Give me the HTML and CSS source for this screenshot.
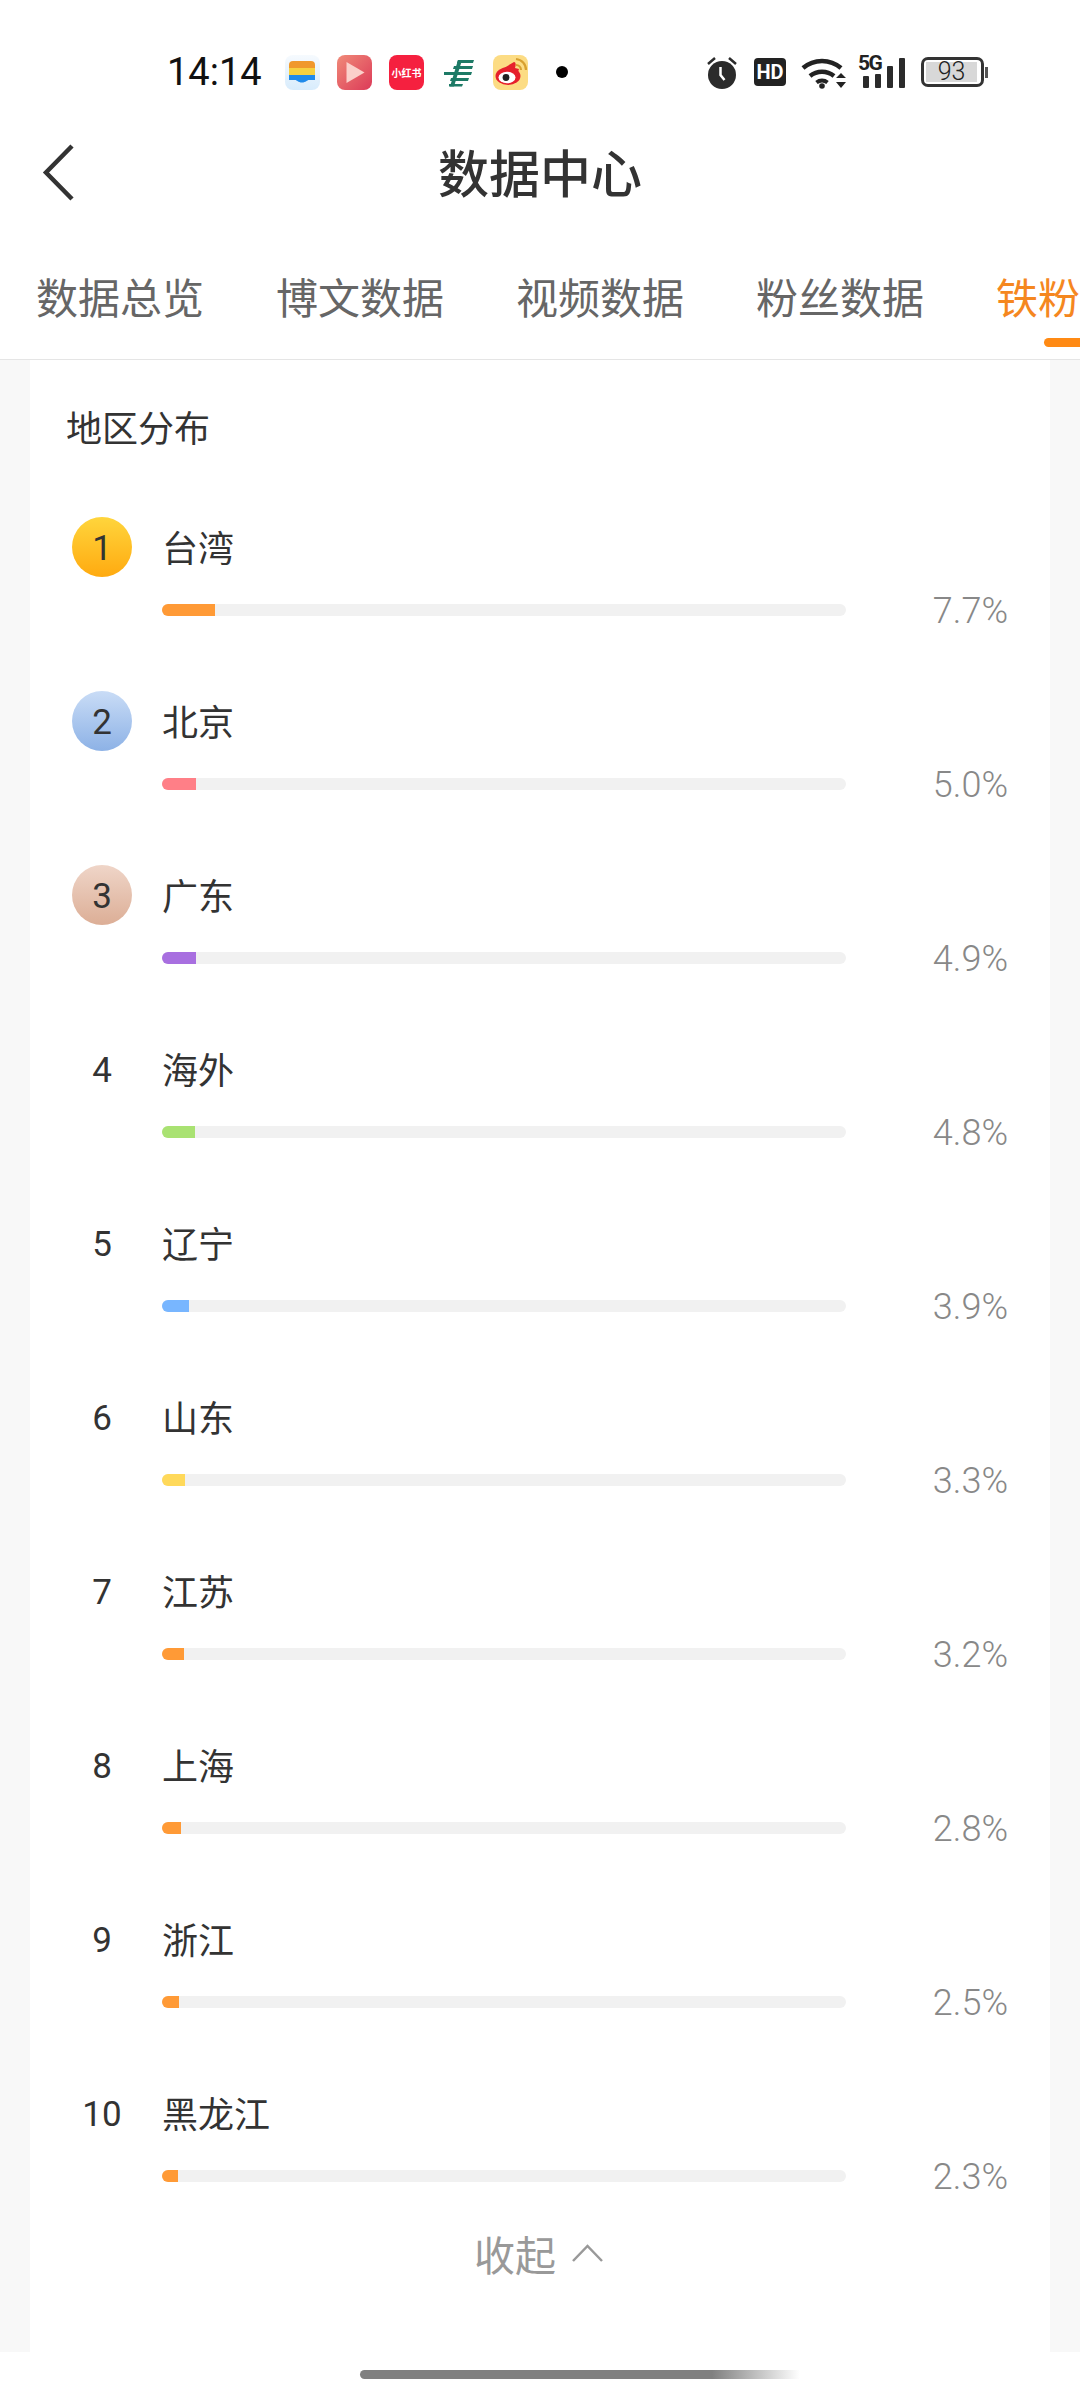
FILE: index.html
```html
<!DOCTYPE html>
<html lang="zh-CN">

<head>
    <meta charset="UTF-8">
    <meta name="viewport" content="width=device-width, initial-scale=1.0">
    <title>数据中心</title>

    <link rel="stylesheet" href="styles.css">
</head>

<body>
    <div class="statusBar">
        <span class="time">14:14</span>
        <div class="appIcons">
            <!-- wallet -->
            <svg class="appIcon" viewBox="0 0 35 35">
                <defs>
                    <linearGradient id="walletBg" x1="0" y1="0" x2="0" y2="1">
                        <stop offset="0" stop-color="#f6fafe" />
                        <stop offset="1" stop-color="#d8ecfc" />
                    </linearGradient>
                </defs>
                <rect width="35" height="35" rx="8" fill="url(#walletBg)" />
                <path d="M4 10a4 4 0 0 1 4-4h18a4 4 0 0 1 4 4v3H4z" fill="#f0982c" />
                <rect x="4" y="13" width="26" height="7" fill="#f6d040" />
                <path d="M4 20h26v5h-6c-2 0-3 2.500-7 2.500s-5-2.500-7-2.500H4z" fill="#1f8aea" />
            </svg>
            <!-- video player -->
            <svg class="appIcon" viewBox="0 0 35 35">
                <defs>
                    <linearGradient id="playBg" x1="0" y1="0" x2="1" y2="1">
                        <stop offset="0" stop-color="#f08a78" />
                        <stop offset="1" stop-color="#dc3a58" />
                    </linearGradient>
                </defs>
                <rect width="35" height="35" rx="8" fill="url(#playBg)" />
                <path d="M9.500 7v21l18-10.500z" fill="#fbd0ca" />
            </svg>
            <!-- xiaohongshu -->
            <div class="appIcon redBook">小红书</div>
            <!-- post office -->
            <svg class="appIcon" viewBox="0 0 35 35">
                <g fill="#1d7a66">
                    <path d="M17 5h16l-1 3H16z" />
                    <path d="M13 11h19l-1 3H12z" />
                    <path d="M3 17h28l-1 3H3z" />
                    <path d="M10 23h18l-1 3H9z" />
                    <path d="M8 29h14l-1 2.500H8z" />
                    <path d="M17 5h4l-8 26.500H9z" />
                </g>
            </svg>
            <!-- weibo -->
            <svg class="appIcon" viewBox="0 0 35 35">
                <rect width="35" height="35" rx="8" fill="#fcdc84" />
                <ellipse cx="15" cy="21" rx="12.500" ry="9" fill="#e6202c" />
                <path d="M11 13l10-6c2 0 2 3 1 6l4 1-2 6z" fill="#e6202c" />
                <ellipse cx="14" cy="22.500" rx="8.500" ry="5.800" fill="#fff" />
                <circle cx="13" cy="22.500" r="3.400" fill="#222" />
                <path d="M23 10a5 5 0 0 1 5 5M23 4a11 11 0 0 1 10 11" fill="none" stroke="#d8a030" stroke-width="2.200" />
            </svg>
        </div>
        <span class="statusDot"></span>

        <div class="sysIcons">
            <svg class="alarmIcon" viewBox="0 0 32 34">
                <circle cx="16" cy="20" r="14" fill="#2b2b2b" />
                <path d="M2 9l7-6M30 9l-7-6" stroke="#2b2b2b" stroke-width="2.500" fill="none" />
                <path d="M14.500 12v8l4 5" stroke="#fff" stroke-width="2.500" fill="none" />
            </svg>
            <span class="hdIcon">HD</span>
            <svg class="wifiIcon" viewBox="0 0 46 33">
                <path d="M2 12a29 29 0 0 1 38 0" fill="none" stroke="#222" stroke-width="4.500" />
                <path d="M9 20a19 19 0 0 1 24 0" fill="none" stroke="#222" stroke-width="4.500" />
                <path d="M15.500 26.500a9 9 0 0 1 11 0" fill="none" stroke="#222" stroke-width="4" />
                <circle cx="21" cy="30" r="2.800" fill="#222" />
                <path d="M35 22h10l-5-5zM35 26h10l-5 6z" fill="#222" />
            </svg>
            <div class="signal">
                <span class="signalLabel">5G</span>
                <span class="signalBar barA"></span>
                <span class="signalBar barB"></span>
                <span class="signalBar barC"></span>
                <span class="signalBar barD"></span>
            </div>
            <div class="battery">
                <div class="batteryBody">
                    <div class="batteryFill">93</div>
                </div>
                <span class="batteryNub"></span>
            </div>
        </div>
    </div>

    <header class="navBar">
        <svg class="backIcon" viewBox="0 0 33 57">
            <path d="M30 2L4 28.500 30 55" fill="none" stroke="#333" stroke-width="4.500" />
        </svg>
        <h1>数据中心</h1>
    </header>

    <nav class="tabs">
        <div class="tab">数据总览</div>
        <div class="tab">博文数据</div>
        <div class="tab">视频数据</div>
        <div class="tab">粉丝数据</div>
        <div class="tab tabActive">铁粉</div>
    </nav>

    <main class="content">
        <section class="card">
            <h2>地区分布</h2>

            <div class="rankList">
                <div class="rankRow">
                    <div class="rankHead"><span class="rankNo gold">1</span><span class="rankName">台湾</span></div>
                    <div class="rankBar">
                        <div class="track"><div class="fill fillOrange" style="width: 7.7%"></div></div>
                        <span class="percent">7.7%</span>
                    </div>
                </div>
                <div class="rankRow">
                    <div class="rankHead"><span class="rankNo silver">2</span><span class="rankName">北京</span></div>
                    <div class="rankBar">
                        <div class="track"><div class="fill fillPink" style="width: 5%"></div></div>
                        <span class="percent">5.0%</span>
                    </div>
                </div>
                <div class="rankRow">
                    <div class="rankHead"><span class="rankNo bronze">3</span><span class="rankName">广东</span></div>
                    <div class="rankBar">
                        <div class="track"><div class="fill fillPurple" style="width: 4.9%"></div></div>
                        <span class="percent">4.9%</span>
                    </div>
                </div>
                <div class="rankRow">
                    <div class="rankHead"><span class="rankNo">4</span><span class="rankName">海外</span></div>
                    <div class="rankBar">
                        <div class="track"><div class="fill fillGreen" style="width: 4.8%"></div></div>
                        <span class="percent">4.8%</span>
                    </div>
                </div>
                <div class="rankRow">
                    <div class="rankHead"><span class="rankNo">5</span><span class="rankName">辽宁</span></div>
                    <div class="rankBar">
                        <div class="track"><div class="fill fillBlue" style="width: 3.9%"></div></div>
                        <span class="percent">3.9%</span>
                    </div>
                </div>
                <div class="rankRow">
                    <div class="rankHead"><span class="rankNo">6</span><span class="rankName">山东</span></div>
                    <div class="rankBar">
                        <div class="track"><div class="fill fillYellow" style="width: 3.3%"></div></div>
                        <span class="percent">3.3%</span>
                    </div>
                </div>
                <div class="rankRow">
                    <div class="rankHead"><span class="rankNo">7</span><span class="rankName">江苏</span></div>
                    <div class="rankBar">
                        <div class="track"><div class="fill fillOrange" style="width: 3.2%"></div></div>
                        <span class="percent">3.2%</span>
                    </div>
                </div>
                <div class="rankRow">
                    <div class="rankHead"><span class="rankNo">8</span><span class="rankName">上海</span></div>
                    <div class="rankBar">
                        <div class="track"><div class="fill fillOrange" style="width: 2.8%"></div></div>
                        <span class="percent">2.8%</span>
                    </div>
                </div>
                <div class="rankRow">
                    <div class="rankHead"><span class="rankNo">9</span><span class="rankName">浙江</span></div>
                    <div class="rankBar">
                        <div class="track"><div class="fill fillOrange" style="width: 2.5%"></div></div>
                        <span class="percent">2.5%</span>
                    </div>
                </div>
                <div class="rankRow">
                    <div class="rankHead"><span class="rankNo">10</span><span class="rankName">黑龙江</span></div>
                    <div class="rankBar">
                        <div class="track"><div class="fill fillOrange" style="width: 2.3%"></div></div>
                        <span class="percent">2.3%</span>
                    </div>
                </div>
            </div>

            <div class="collapse">
                <span>收起</span>
                <svg class="collapseIcon" viewBox="0 0 32 18">
                    <path d="M1.500 17L16 2l14.500 15" fill="none" stroke="#999" stroke-width="2.500" />
                </svg>
            </div>
        </section>
    </main>

    <div class="homeArea">
        <div class="homeBar"></div>
    </div>
</body>

</html>
```

FILE: styles.css
```css
body {
    font-family: Roboto, "Noto Sans CJK SC", sans-serif;
    background-color: #fff;
    color: #333;
    margin: 0;
    padding: 0;
    width: 1080px;
    height: 2400px;
    overflow: hidden;
    display: flex;
    flex-direction: column;
}

/* Status bar */
.statusBar {
    height: 144px;
    display: flex;
    align-items: center;
    padding: 0 92px 0 167px;
    box-sizing: border-box;
}

.time {
    font-size: 38px;
    color: #111;
    width: 118px;
}

.appIcons {
    display: flex;
    gap: 17px;
    align-items: center;
}

.appIcon {
    width: 35px;
    height: 35px;
}

.redBook {
    background-color: #f5203f;
    border-radius: 8px;
    color: #fff;
    font-size: 10px;
    font-weight: bold;
    display: flex;
    align-items: center;
    justify-content: center;
    white-space: nowrap;
}

.statusDot {
    width: 12px;
    height: 12px;
    border-radius: 50%;
    background-color: #000;
    margin-left: 28px;
}

.sysIcons {
    margin-left: auto;
    display: flex;
    align-items: center;
}

.alarmIcon {
    width: 32px;
    height: 34px;
}

.hdIcon {
    width: 32px;
    height: 28px;
    margin-left: 16px;
    background-color: #222;
    border-radius: 4px;
    color: #fff;
    font-size: 20px;
    font-weight: bold;
    line-height: 28px;
    text-align: center;
}

.wifiIcon {
    width: 46px;
    height: 33px;
    margin-left: 15px;
}

.signal {
    position: relative;
    width: 47px;
    height: 32px;
    margin-left: 11px;
    display: flex;
    align-items: flex-end;
    gap: 6px;
    padding-left: 5px;
    box-sizing: border-box;
}

.signalLabel {
    position: absolute;
    left: 0;
    top: -2px;
    font-size: 21px;
    line-height: 18px;
    font-weight: bold;
    color: #222;
    letter-spacing: -1.5px;
}

.signalBar {
    width: 6px;
    background-color: #2b2b2b;
    border-radius: 1px;
}

.barA {
    height: 12px;
}

.barB {
    height: 14px;
}

.barC {
    height: 22px;
}

.barD {
    height: 30px;
}

.battery {
    margin-left: 16px;
    display: flex;
    align-items: center;
}

.batteryBody {
    width: 63px;
    height: 30px;
    box-sizing: border-box;
    border: 3px solid #333;
    border-radius: 7px;
    padding: 2px;
}

.batteryFill {
    width: 51px;
    height: 20px;
    background-color: #d8d8d8;
    font-size: 25px;
    font-weight: 300;
    line-height: 20px;
    text-align: center;
    color: #222;
}

.batteryNub {
    width: 3px;
    height: 11px;
    margin-left: 1px;
    background-color: #555;
}

/* Title bar */
.navBar {
    height: 62px;
    position: relative;
    display: flex;
    align-items: center;
    justify-content: center;
}

.navBar h1 {
    margin: 0;
    font-size: 51px;
    font-weight: 500;
    line-height: 62px;
    color: #333;
    position: relative;
    top: 1px;
}

.backIcon {
    position: absolute;
    left: 42px;
    top: 0;
    width: 33px;
    height: 57px;
}

/* Tabs */
.tabs {
    display: flex;
    gap: 72px;
    padding: 68px 0 12px 36px;
    border-bottom: 1px solid #e5e5e5;
    overflow: hidden;
    white-space: nowrap;
}

.tab {
    font-size: 42px;
    line-height: 52px;
    color: #666;
    flex: none;
    position: relative;
    padding-bottom: 21px;
}

.tabActive {
    color: #f5871f;
}

.tabActive::after {
    content: "";
    position: absolute;
    left: 48px;
    bottom: 0;
    width: 72px;
    height: 9px;
    border-radius: 5px;
    background-color: #ff8a14;
}

/* Card */
.content {
    flex: 1;
    background-color: #f8f8f8;
    padding: 0 30px;
    min-height: 0;
}

.card {
    height: 100%;
    background-color: #fff;
    padding: 42px 42px 0 36px;
    box-sizing: border-box;
}

.card h2 {
    margin: 0 0 59px;
    font-size: 36px;
    font-weight: 400;
    line-height: 56px;
    color: #333;
}

.rankList {
    display: flex;
    flex-direction: column;
    gap: 61px;
    padding-left: 6px;
}

.rankHead {
    display: flex;
    align-items: center;
    height: 60px;
    margin-bottom: 13px;
}

.rankNo {
    width: 60px;
    height: 60px;
    border-radius: 50%;
    flex: none;
    margin-right: 30px;
    font-size: 35px;
    line-height: 64px;
    text-align: center;
    color: #333;
}

.gold {
    background: linear-gradient(#ffd53c, #ffaa10);
}

.silver {
    background: linear-gradient(#c9dcf6, #8db2e6);
}

.bronze {
    background: linear-gradient(#efd5c8, #dcae96);
}

.rankName {
    font-size: 36px;
    line-height: 66px;
    height: 60px;
    color: #333;
}

.rankBar {
    display: flex;
    align-items: center;
    justify-content: space-between;
    height: 40px;
    padding-left: 90px;
}

.track {
    width: 684px;
    height: 12px;
    background-color: #f1f1f1;
    border-radius: 6px;
    overflow: hidden;
}

.fill {
    height: 100%;
}

.fillOrange {
    background-color: #ff9a36;
}

.fillPink {
    background-color: #ff7f87;
}

.fillPurple {
    background-color: #a86fe0;
}

.fillGreen {
    background-color: #a9e272;
}

.fillBlue {
    background-color: #78b6ff;
}

.fillYellow {
    background-color: #ffd95a;
}

.percent {
    font-size: 36px;
    font-weight: 300;
    line-height: 42px;
    height: 40px;
    color: #888;
}

.collapse {
    margin-top: 29px;
    height: 56px;
    padding-left: 4px;
    display: flex;
    align-items: center;
    justify-content: center;
    gap: 15px;
    font-size: 41px;
    color: #999;
}

.collapseIcon {
    width: 33px;
    height: 18px;
}

/* Home indicator */
.homeArea {
    height: 48px;
    background-color: #fff;
    padding: 18px 0 0 360px;
    box-sizing: border-box;
}

.homeBar {
    width: 440px;
    height: 9px;
    border-radius: 5px 0 0 5px;
    background: linear-gradient(to right, #808080 80%, #fff 100%);
}
```
